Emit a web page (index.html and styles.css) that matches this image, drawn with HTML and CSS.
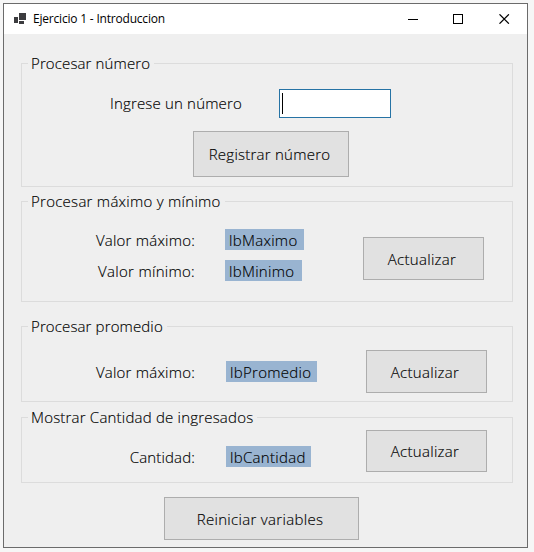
FILE: index.html
```html
<!DOCTYPE html>
<html lang="es">
<head>
<meta charset="utf-8">
<title>Ejercicio 1 - Introduccion</title>
<link rel="stylesheet" href="styles.css">
</head>
<body>
<main class="window">
  <header class="titlebar">
    <svg class="app-icon" width="13" height="11" viewBox="0 0 13 11" shape-rendering="crispEdges" fill="#3c3c3f"><path d="M0 4h4v6H0zM5 0h7v7H5zM5 8h5v3H5z"/></svg>
    <h1 class="title">Ejercicio 1 - Introduccion</h1>
    <svg class="controls" width="102" height="10" viewBox="0 0 102 10" fill="none" stroke="#000"><path d="M0 5.5h10M45.5 .5h9v9h-9z" shape-rendering="crispEdges"/><path d="M91.5 .3l9.4 9.4M100.9 .3l-9.4 9.4" stroke-width="1.2"/></svg>
  </header>
  <section class="group group-number">
    <h2 class="legend t-number">Procesar número</h2>
    <div class="entry">
      <label class="t-entry" for="numero">Ingrese un número</label>
      <div class="field" id="numero"><span class="caret"></span></div>
    </div>
    <button class="btn btn-register"><span class="t-register">Registrar número</span></button>
  </section>
  <section class="group group-range">
    <h2 class="legend t-range">Procesar máximo y mínimo</h2>
    <div class="values">
      <div class="row"><span class="name"><span class="t-max">Valor máximo:</span></span><span class="value v-max"><span>lbMaximo</span></span></div>
      <div class="row"><span class="name"><span class="t-min">Valor mínimo:</span></span><span class="value v-min"><span>lbMinimo</span></span></div>
    </div>
    <button class="btn btn-update"><span class="t-update">Actualizar</span></button>
  </section>
  <section class="group group-average">
    <h2 class="legend t-average">Procesar promedio</h2>
    <div class="values">
      <div class="row"><span class="name"><span class="t-max">Valor máximo:</span></span><span class="value v-average"><span>lbPromedio</span></span></div>
    </div>
    <button class="btn btn-update"><span class="t-update">Actualizar</span></button>
  </section>
  <section class="group group-count">
    <h2 class="legend t-count">Mostrar Cantidad de ingresados</h2>
    <div class="values">
      <div class="row"><span class="name"><span class="t-qty">Cantidad:</span></span><span class="value v-count"><span>lbCantidad</span></span></div>
    </div>
    <button class="btn btn-update"><span class="t-update">Actualizar</span></button>
  </section>
  <button class="btn btn-reset"><span class="t-reset">Reiniciar variables</span></button>
</main>
</body>
</html>
```
FILE: styles.css
```css
* { box-sizing: border-box; }
body {
  margin: 0;
  padding: 3px;
  height: 552px;
  background: #f6f6f6;
  overflow: hidden;
  font-family: "Open Sans", "Noto Sans", sans-serif;
  font-weight: 300;
  font-size: 15px;
  line-height: 21px;
  color: #000;
  white-space: nowrap;
  -webkit-text-stroke: 0.15px #000;
}
.window {
  width: 525px;
  height: 545px;
  border: 1px solid #6b6b6b;
  background: #efefef;
}
.titlebar {
  display: flex;
  align-items: center;
  height: 30px;
  padding-left: 10px;
  background: #fff;
}
.app-icon { margin-top: -1px; }
.title {
  margin: -1px 0 0 6px;
  width: 375px;
  font-size: 12px;
  font-weight: 400;
  letter-spacing: -0.2px;
  -webkit-text-stroke: 0;
}
.controls { margin-top: -1px; }
.group {
  position: relative;
  display: flex;
  width: 492px;
  margin-left: 17px;
  border: 1px solid #dcdcdc;
}
.legend {
  position: absolute;
  top: -11px;
  left: 6px;
  margin: 0;
  padding: 0 4px 0 3px;
  background: #efefef;
  font-size: 15px;
  font-weight: 300;
}
.group-number {
  flex-direction: column;
  height: 124px;
  margin-top: 29px;
  padding-top: 25px;
}
.group-range { height: 101px; margin-top: 14px; padding-top: 27px; }
.group-average { height: 76px; margin-top: 24px; padding-top: 34px; }
.group-count { height: 66px; margin-top: 15px; padding-top: 28px; }
.entry { display: flex; align-items: center; }
.entry label { width: 169px; margin-left: 88px; }
.field {
  width: 112px;
  height: 29px;
  padding: 3px 2px;
  border: 1px solid #2673a5;
  background: #fff;
}
.caret { display: block; width: 1px; height: 21px; background: #000; }
.btn {
  display: flex;
  align-items: center;
  justify-content: center;
  padding: 0 3px 0 0;
  border: 1px solid #adadad;
  border-radius: 0;
  background: #e1e1e1;
  color: #000;
  font: inherit;
}
.btn-register { width: 156px; height: 46px; margin: 13px 0 0 171px; }
.values { display: flex; flex-direction: column; gap: 10px; width: 341px; }
.row { display: flex; height: 21px; line-height: 23px; }
.name { width: 174px; padding-right: 1px; text-align: right; }
.value {
  height: 21px;
  margin-left: 30px;
  padding-left: 4px;
  background: #99b4d1;
  letter-spacing: 0.3px;
}
.v-max, .v-min { margin-left: 29px; }
.v-max { width: 79px; }
.v-min { width: 77px; }
.v-average { width: 91px; }
.v-count { width: 85px; }
.btn-update { width: 121px; height: 43px; padding-top: 2px; margin-top: 8px; }
.group-average .btn-update { margin: -11px 0 0 3px; }
.group-count .btn-update { height: 42px; padding-top: 0; margin: -16px 0 0 3px; }
.btn-reset { width: 195px; height: 43px; padding-top: 2px; margin: 14px 0 0 160px; }
.t-number { letter-spacing: 0.13px; }
.t-entry { letter-spacing: 0.17px; }
.t-register { letter-spacing: 0.24px; }
.t-range { letter-spacing: 0.27px; }
.t-max { letter-spacing: 0.22px; }
.t-min { letter-spacing: 0.3px; }
.t-average { letter-spacing: 0.13px; }
.t-count { letter-spacing: 0.2px; }
.t-qty { letter-spacing: 0.15px; }
.t-update { letter-spacing: 0.3px; }
.t-reset { letter-spacing: 0.32px; }
```
